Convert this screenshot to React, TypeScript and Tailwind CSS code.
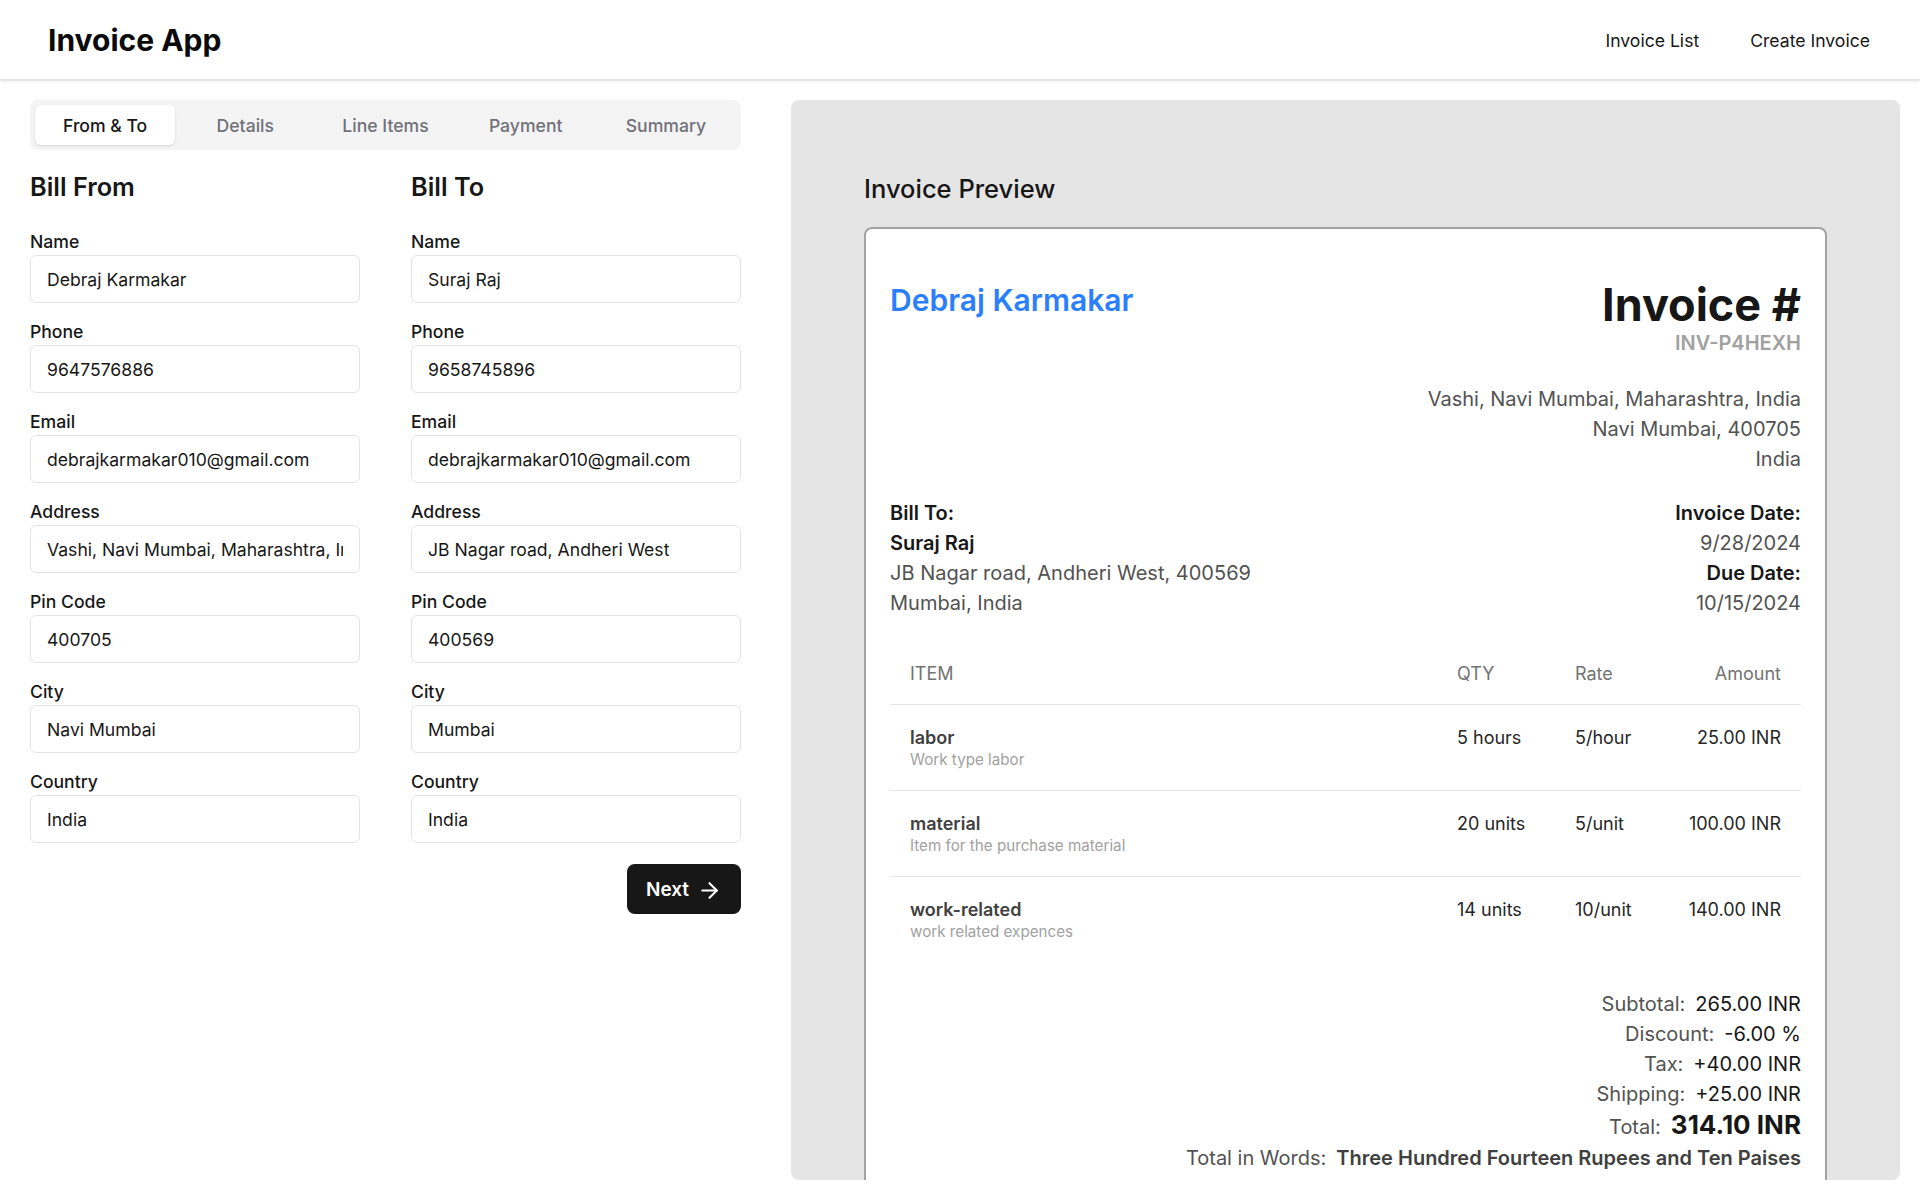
import React from "react";
import { ArrowRight } from "lucide-react";

const tabs = ["From & To", "Details", "Line Items", "Payment", "Summary"];

const fromFields = [
  ["Name", "Debraj Karmakar"],
  ["Phone", "9647576886"],
  ["Email", "debrajkarmakar010@gmail.com"],
  ["Address", "Vashi, Navi Mumbai, Maharashtra, India"],
  ["Pin Code", "400705"],
  ["City", "Navi Mumbai"],
  ["Country", "India"],
];

const toFields = [
  ["Name", "Suraj Raj"],
  ["Phone", "9658745896"],
  ["Email", "debrajkarmakar010@gmail.com"],
  ["Address", "JB Nagar road, Andheri West"],
  ["Pin Code", "400569"],
  ["City", "Mumbai"],
  ["Country", "India"],
];

const items = [
  { name: "labor", desc: "Work type labor", qty: "5 hours", rate: "5/hour", amount: "25.00 INR" },
  { name: "material", desc: "Item for the purchase material", qty: "20 units", rate: "5/unit", amount: "100.00 INR" },
  { name: "work-related", desc: "work related expences", qty: "14 units", rate: "10/unit", amount: "140.00 INR" },
];

function Field({ label, value }: { label: string; value: string }) {
  return (
    <div className="flex flex-col">
      <label className="mb-[1px] pt-[3px] text-[17.6px] leading-6 font-medium text-neutral-900">{label}</label>
      <input
        readOnly
        value={value}
        className="h-12 w-full rounded-md border border-[#e4e4e7] bg-white px-4 text-[17.6px] text-neutral-900 outline-none"
      />
    </div>
  );
}

function Column({ title, fields }: { title: string; fields: string[][] }) {
  return (
    <div className="flex flex-col">
      <h2 className="mb-6 text-[25.3px] leading-8 font-semibold text-neutral-900">{title}</h2>
      <div className="flex flex-col gap-[14px]">
        {fields.map(([l, v]) => (
          <Field key={l} label={l} value={v} />
        ))}
      </div>
    </div>
  );
}

function SumRow({ label, value }: { label: string; value: string }) {
  return (
    <div className="flex justify-end gap-[10px]">
      <span className="text-neutral-600">{label}</span>
      <span className="text-neutral-900">{value}</span>
    </div>
  );
}

export default function App() {
  return (
    <div className="min-h-screen bg-white font-[Inter,sans-serif] text-neutral-900">
      <header className="flex h-20 items-center justify-between border-b border-neutral-200 px-12 shadow-sm">
        <h1 className="text-3xl font-bold text-neutral-950">Invoice App</h1>
        <nav className="mt-1 flex items-center gap-[51px] pr-[2px] text-[17.6px] text-neutral-900">
          <a>Invoice List</a>
          <a>Create Invoice</a>
        </nav>
      </header>

      <main className="flex gap-[50px] pt-5 pr-5 pl-[30px]">
        <section className="w-[711px] shrink-0">
          <div className="grid h-[50px] grid-cols-5 rounded-lg bg-[#f4f4f5] p-[5px]">
            {tabs.map((t, i) => (
              <div
                key={t}
                className={
                  i === 0
                    ? "flex items-center justify-center rounded-md bg-white pt-[2px] text-[17.6px] font-medium text-neutral-900 shadow-sm"
                    : "flex items-center justify-center rounded-md pt-[2px] text-[17.6px] font-medium text-[#71717a]"
                }
              >
                {t}
              </div>
            ))}
          </div>

          <div className="mt-[21px] grid grid-cols-2 gap-x-[51px]">
            <Column title="Bill From" fields={fromFields} />
            <Column title="Bill To" fields={toFields} />
          </div>

          <div className="mt-[21px] flex justify-end">
            <button className="flex h-[50px] w-[114px] items-center justify-center gap-2 rounded-lg bg-[#171717] pt-[2px] text-[19px] font-semibold text-white">
              Next
              <ArrowRight size={25} strokeWidth={2} />
            </button>
          </div>
        </section>

        <section className="h-[1080px] flex-1 overflow-hidden rounded-lg bg-[#e5e5e5] px-[73px] pt-[73px]">
          <h2 className="mb-[22px] text-[25.5px] leading-8 font-medium text-neutral-900">Invoice Preview</h2>

          <div className="rounded-lg border-2 border-[#a3a3a3] bg-white px-6 pt-[53px] pb-10">
            <div className="flex items-start justify-between">
              <div className="text-3xl font-semibold text-blue-500">Debraj Karmakar</div>
              <div className="text-right">
                <div className="text-[45px] leading-none font-bold text-neutral-900">Invoice #</div>
                <div className="mt-0.5 text-xl font-semibold text-neutral-400">INV-P4HEXH</div>
              </div>
            </div>

            <div className="mt-[27px] text-right text-xl leading-[30px] text-neutral-600">
              <p>Vashi, Navi Mumbai, Maharashtra, India</p>
              <p>Navi Mumbai, 400705</p>
              <p>India</p>
            </div>

            <div className="mt-6 flex justify-between text-xl leading-[30px]">
              <div>
                <p className="font-semibold text-neutral-900">Bill To:</p>
                <p className="font-semibold text-neutral-900">Suraj Raj</p>
                <p className="text-neutral-600">JB Nagar road, Andheri West, 400569</p>
                <p className="text-neutral-600">Mumbai, India</p>
              </div>
              <div className="text-right">
                <p className="font-semibold text-neutral-900">Invoice Date:</p>
                <p className="text-neutral-600">9/28/2024</p>
                <p className="font-semibold text-neutral-900">Due Date:</p>
                <p className="text-neutral-600">10/15/2024</p>
              </div>
            </div>

            <div className="mt-[26px] text-lg">
              <div className="grid grid-cols-[1fr_118px_118px_128px] border-b border-neutral-200 text-neutral-500">
                <div className="px-5 py-4">ITEM</div>
                <div className="px-5 py-4">QTY</div>
                <div className="px-5 py-4">Rate</div>
                <div className="py-4 pr-5 text-right whitespace-nowrap">Amount</div>
              </div>
              {items.map((it, i) => (
                <div
                  key={it.name}
                  className={
                    i < items.length - 1
                      ? "grid grid-cols-[1fr_118px_118px_128px] border-b border-neutral-200"
                      : "grid grid-cols-[1fr_118px_118px_128px]"
                  }
                >
                  <div className="px-5 pt-[21px] pb-5">
                    <div className="leading-6 font-semibold text-neutral-700">{it.name}</div>
                    <div className="text-[15.2px] leading-5 text-neutral-400">{it.desc}</div>
                  </div>
                  <div className="px-5 pt-[21px] leading-6 whitespace-nowrap text-neutral-800">{it.qty}</div>
                  <div className="px-5 pt-[21px] leading-6 whitespace-nowrap text-neutral-800">{it.rate}</div>
                  <div className="pt-[21px] pr-5 text-right leading-6 whitespace-nowrap text-neutral-800">{it.amount}</div>
                </div>
              ))}
            </div>

            <div className="mt-[27px] text-right text-xl leading-[30px]">
              <SumRow label="Subtotal:" value="265.00 INR" />
              <SumRow label="Discount:" value="-6.00 %" />
              <SumRow label="Tax:" value="+40.00 INR" />
              <SumRow label="Shipping:" value="+25.00 INR" />
              <div className="flex items-baseline justify-end gap-[10px] leading-8">
                <span className="text-neutral-600">Total:</span>
                <span className="text-[26px] font-bold text-neutral-900">314.10 INR</span>
              </div>
              <div className="flex justify-end gap-[10px]">
                <span className="text-neutral-600">Total in Words:</span>
                <span className="font-semibold text-neutral-700">Three Hundred Fourteen Rupees and Ten Paises</span>
              </div>
            </div>
          </div>
        </section>
      </main>
    </div>
  );
}
